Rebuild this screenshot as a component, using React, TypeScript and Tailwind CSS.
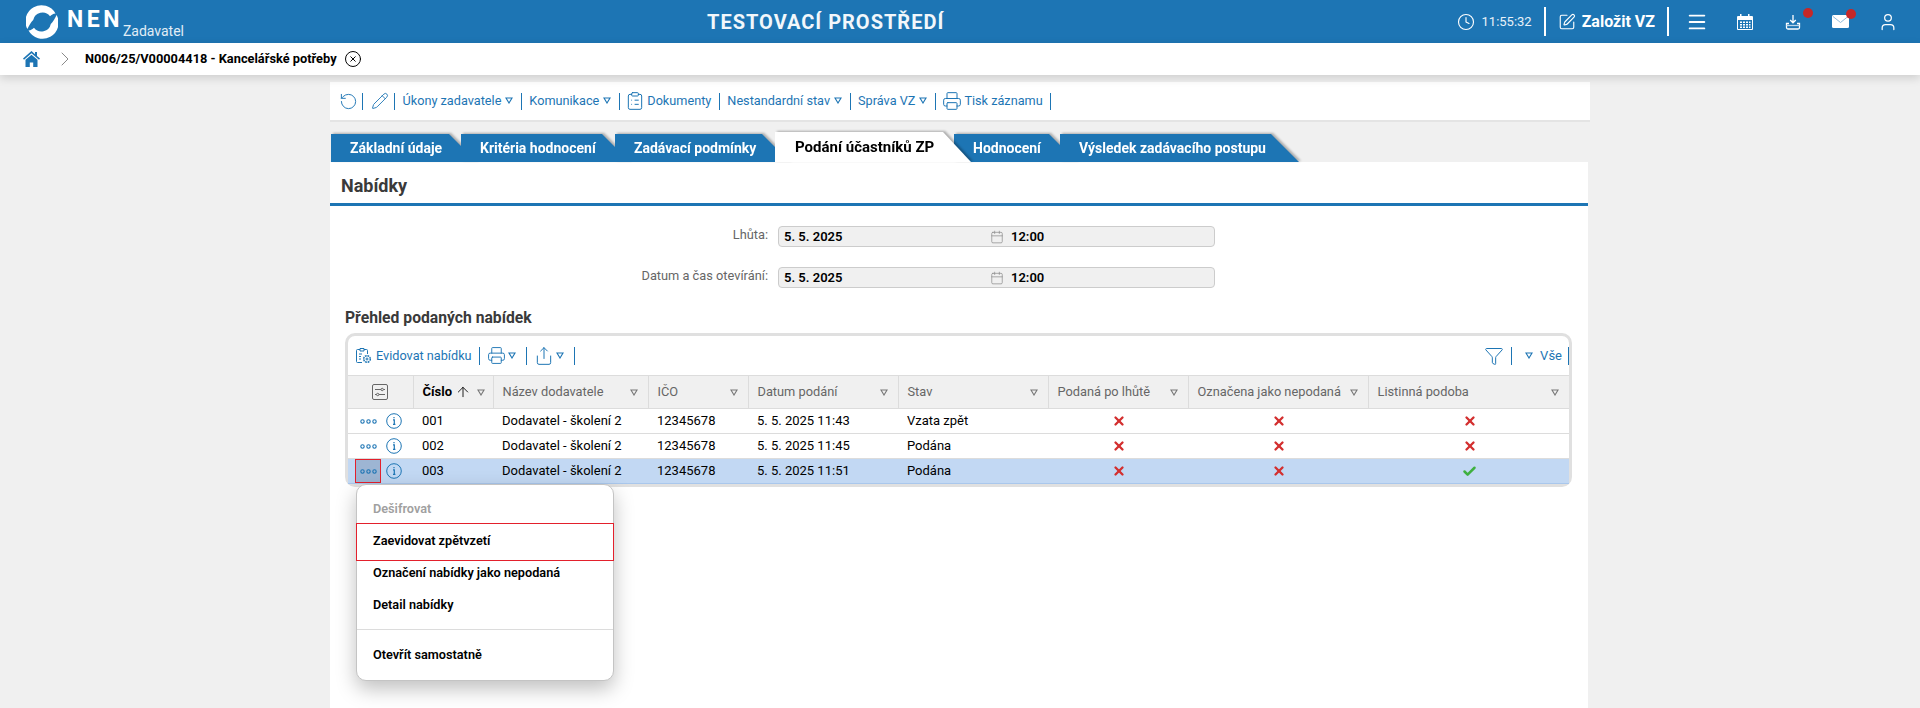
import { Calendar, Clock, Funnel, Menu, Pencil, Printer, RotateCcw, Share, SquarePen, User, ClipboardList, ChevronRight, CircleX, ArrowUp, X, Check } from 'lucide-react';

const BLUE = 'text-[#1d75b4]';

function Tri({ className = 'text-[#1d75b4]' }: { className?: string }) {
  return (
    <svg viewBox="0 0 8 7" className={`h-[7px] w-[8px] shrink-0 ${className}`} fill="none" stroke="currentColor" strokeWidth="1.1">
      <path d="M1 1h6L4 6z" />
    </svg>
  );
}

function Sep({ h = 'h-[17px]' }: { h?: string }) {
  return <span className={`w-px shrink-0 bg-[#1d75b4] ${h}`} />;
}

function Logo() {
  const arc = 'M1.400 24A16 16 0 0 1 29.500 8.500C27 8.500 25.500 10 24 11.200A9.500 9.500 0 0 0 7.200 15C5 17 3 20.500 1.400 24z';
  return (
    <svg viewBox="0 0 32 34" className="h-[34px] w-[32px]" fill="#fff">
      <path d={arc} />
      <path d={arc} transform="rotate(180 16 17)" />
    </svg>
  );
}

function HomeIcon() {
  return (
    <svg viewBox="0 0 17 16" className="h-[16px] w-[17px]" fill="#1d75b4">
      <path d="M8.500 0 0 7.500l1 1.200L8.500 2.300 16 8.700l1-1.200-3-2.600V1h-2v2.200z" />
      <path d="M8.500 3.700 2.500 8.800V16h4.300v-4.500h3.400V16h4.300V8.800z" />
    </svg>
  );
}

function CalendarIcon() {
  return (
    <svg viewBox="0 0 16 16" className="h-[16px] w-[16px]" fill="#fff">
      <path d="M3 0h1.500v2H11V0h1.500v2H15a1 1 0 0 1 1 1v12a1 1 0 0 1-1 1H1a1 1 0 0 1-1-1V3a1 1 0 0 1 1-1h2zM1 6v9h14V6z" />
      <path d="M3 7.500h2v1.500H3zM6 7.500h2v1.500H6zM9 7.500h2v1.500H9zM12 7.500h1.500v1.500H12zM3 10h2v1.500H3zM6 10h2v1.500H6zM9 10h2v1.500H9zM12 10h1.500v1.500H12zM3 12.500h2V14H3zM6 12.500h2V14H6zM9 12.500h2V14H9zM12 12.500h1.500V14H12z" />
    </svg>
  );
}

function TrayIcon() {
  return (
    <svg viewBox="0 0 16 16" className="h-[16px] w-[16px]" fill="none" stroke="#fff" strokeWidth="1.300">
      <path d="M8 1v7.500M5.200 6 8 8.800 10.800 6M4 9.500H1.500v4a1.500 1.500 0 0 0 1.500 1.500h10a1.500 1.500 0 0 0 1.500-1.500v-4H12" />
      <path d="M1.500 11.500h13" stroke="#bcd6ea" />
    </svg>
  );
}

function MailIcon() {
  return (
    <svg viewBox="0 0 17 13" className="h-[13px] w-[17px]">
      <rect width="17" height="13" rx="1.500" fill="#fff" />
      <path d="M1 1.500 8.500 7.500 16 1.500" fill="none" stroke="#8fbbdb" strokeWidth="1" />
    </svg>
  );
}

function EvidovatIcon() {
  return (
    <svg viewBox="0 0 17 17" className="h-[17px] w-[17px]" fill="none" stroke="#1d75b4" strokeWidth="1">
      <path d="M7 15.500H2.500a1 1 0 0 1-1-1V3.500a1 1 0 0 1 1-1H5M9 2.500h2.500a1 1 0 0 1 1 1V7M5 1.500h4V4H5z" />
      <path d="M4 7h3M4 9.500h2M4 12h2" />
      <circle cx="12" cy="12" r="3.300" strokeDasharray="1.800 0.800" strokeWidth="1.500" />
      <circle cx="12" cy="12" r="1" />
    </svg>
  );
}

function ColumnsIcon() {
  return (
    <svg viewBox="0 0 16 16" className="mx-auto h-[16px] w-[16px]" fill="none" stroke="#666" strokeWidth="1">
      <rect x="0.500" y="0.500" width="15" height="15" rx="1.500" />
      <path d="M3 5.500h6M11.500 5.500H13M3 10.500h1.500M7 10.500h6" />
      <circle cx="10.200" cy="5.500" r="1.200" />
      <circle cx="5.700" cy="10.500" r="1.200" />
    </svg>
  );
}

function Dots() {
  return (
    <svg viewBox="0 0 17 5" className="h-[5px] w-[17px]" fill="none" stroke="#1d75b4" strokeWidth="1.100">
      <circle cx="2.500" cy="2.500" r="1.700" />
      <circle cx="8.500" cy="2.500" r="1.700" />
      <circle cx="14.500" cy="2.500" r="1.700" />
    </svg>
  );
}

function InfoIcon() {
  return (
    <svg viewBox="0 0 16 16" className="h-[16px] w-[16px]" fill="none" stroke="#1d75b4" strokeWidth="1">
      <circle cx="8" cy="8" r="7.300" />
      <path d="M7 6.800h1.300v4.200M7 11.300h2.400M8 4v1.300" strokeWidth="1.200" />
    </svg>
  );
}

const tabs = [
  { label: 'Základní údaje', w: 'w-[146px]', ml: '' },
  { label: 'Kritéria hodnocení', w: 'w-[169px]', ml: '-ml-[16px]' },
  { label: 'Zadávací podmínky', w: 'w-[175px]', ml: '-ml-[15px]' },
  { label: 'Podání účastníků ZP', w: 'w-[196px]', ml: '-ml-[15px]', active: true },
  { label: 'Hodnocení', w: 'w-[123px]', ml: '-ml-[17px]' },
  { label: 'Výsledek zadávacího postupu', w: 'w-[239px]', ml: '-ml-[17px]' },
];

const columns = [
  { label: 'Název dodavatele', w: 'w-[155px]' },
  { label: 'IČO', w: 'w-[100px]' },
  { label: 'Datum podání', w: 'w-[150px]' },
  { label: 'Stav', w: 'w-[150px]' },
  { label: 'Podaná po lhůtě', w: 'w-[140px]' },
  { label: 'Označena jako nepodaná', w: 'w-[180px]' },
  { label: 'Listinná podoba', w: 'w-[201px]' },
];

const rows = [
  { id: '001', date: '5. 5. 2025 11:43', stav: 'Vzata zpět', paper: false },
  { id: '002', date: '5. 5. 2025 11:45', stav: 'Podána', paper: false },
  { id: '003', date: '5. 5. 2025 11:51', stav: 'Podána', paper: true, selected: true },
];

function Cross() {
  return <X className="mx-auto size-[14px] text-[#d32f2f]" strokeWidth={4} />;
}

function DateRow({ label, className = '' }: { label: string; className?: string }) {
  return (
    <div className={`flex h-[21px] items-center gap-[10px] ${className}`}>
      <div className="w-[438px] pb-[4px] text-right text-[12.800px] text-[#666]">{label}</div>
      <div className="flex h-[21px] w-[437px] items-center rounded-[4px] border border-[#ccc] bg-[#f0f0f0] pl-[5px] text-[13px] font-semibold text-black">
        <span className="w-[206px]">5. 5. 2025</span>
        <Calendar className="size-[14px] text-[#888]" strokeWidth={1.200} />
        <span className="ml-[7px]">12:00</span>
      </div>
    </div>
  );
}

function MenuItem({ label, className = 'text-black' }: { label: string; className?: string }) {
  return <div className={`flex h-[32px] items-center px-[16px] text-[12.700px] font-semibold ${className}`}>{label}</div>;
}

export default function App() {
  return (
    <div className="h-[708px] overflow-hidden bg-[#f0f0f0] font-[Roboto,sans-serif]">
      <header className="flex h-[43px] items-center bg-[#1d75b4] text-white">
        <div className="flex w-[707px] shrink-0 items-center pl-[26px]">
          <Logo />
          <span className="ml-[9px] mt-[-4px] text-[23px] leading-none font-bold tracking-[3.500px]">NEN</span>
          <span className="mt-[18px] text-[14px] leading-none text-[#e1edf6]">Zadavatel</span>
        </div>
        <div className="text-[20px] font-bold tracking-[1px] text-[#f2f7fb]">TESTOVACÍ PROSTŘEDÍ</div>
        <div className="ml-auto flex items-center">
          <Clock className="size-[18px]" strokeWidth={1.500} />
          <span className="ml-[7px] text-[13px] text-[#e8f1f8]">11:55:32</span>
          <span className="ml-[12px] h-[29px] w-[2px] bg-white" />
          <SquarePen className="ml-[12px] size-[18px]" strokeWidth={1.500} />
          <span className="ml-[6px] text-[16px] font-bold">Založit VZ</span>
          <span className="ml-[12px] h-[29px] w-[2px] bg-white" />
          <Menu className="ml-[17px] size-[22px]" strokeWidth={2} />
          <span className="ml-[29px]"><CalendarIcon /></span>
          <span className="relative ml-[32px]">
            <TrayIcon />
            <span className="absolute -right-[12px] -top-[6px] size-[10px] rounded-full bg-[#c62828]" />
          </span>
          <span className="relative ml-[31px]">
            <MailIcon />
            <span className="absolute -right-[7px] -top-[6px] size-[10px] rounded-full bg-[#c62828]" />
          </span>
          <User className="ml-[29px] mr-[22px] size-[20px]" strokeWidth={1.500} />
        </div>
      </header>

      <div className="relative flex h-[32px] items-center bg-white pl-[23px] shadow-[0_3px_10px_rgba(0,0,0,0.15)]">
        <HomeIcon />
        <ChevronRight className="ml-[13px] size-[24px] text-[#8a8a8a]" strokeWidth={1} />
        <span className="ml-[8px] text-[12.800px] font-bold text-black">N006/25/V00004418 - Kancelářské potřeby</span>
        <CircleX className="ml-[7px] size-[18px] text-black" strokeWidth={1.300} />
      </div>

      <main className="ml-[330px] w-[1260px]">
        <nav className={`mt-[7px] flex h-[40px] items-center gap-[7.500px] border-b-2 border-[#e4e4e4] bg-white pl-[9px] text-[12.700px] ${BLUE}`}>
          <RotateCcw className="-mr-[3.500px] size-[19px]" strokeWidth={1.200} />
          <Sep />
          <Pencil className="-mr-[2px] size-[18px]" strokeWidth={1.200} />
          <Sep />
          <span className="flex items-center gap-[4px]">
            Úkony zadavatele
            <Tri />
          </span>
          <Sep />
          <span className="flex items-center gap-[4px]">
            Komunikace
            <Tri />
          </span>
          <Sep />
          <span className="-ml-[2px] flex items-center gap-[2px]">
            <ClipboardList className="size-[20px]" strokeWidth={1.200} />
            Dokumenty
          </span>
          <Sep />
          <span className="flex items-center gap-[4px]">
            Nestandardní stav
            <Tri />
          </span>
          <Sep />
          <span className="flex items-center gap-[4px]">
            Správa VZ
            <Tri />
          </span>
          <Sep />
          <span className="-ml-[1px] flex items-center gap-[2px]">
            <Printer className="size-[20px]" strokeWidth={1.200} />
            Tisk záznamu
          </span>
          <Sep />
        </nav>

        <div className="mt-[10px] flex h-[30px] items-end pl-[1px]">
          {tabs.map((t) => (
            <div key={t.label} className={`${t.w} ${t.ml} relative ${t.active ? 'z-10' : ''} [filter:drop-shadow(2px_-1px_1px_rgba(0,0,0,0.28))]`}>
              <div
                className={`flex items-center font-bold whitespace-nowrap [clip-path:polygon(0_0,calc(100%-28px)_0,100%_100%,0_100%)] ${
                  t.active ? 'h-[30px] bg-white pl-[20px] text-[15px] text-black' : 'h-[28px] bg-[#1d75b4] pl-[19px] text-[14px] text-white'
                }`}
              >
                {t.label}
              </div>
            </div>
          ))}
        </div>

        <section className="h-[546px] w-[1258px] bg-white">
          <h1 className="flex h-[44px] items-center border-b-[3px] border-[#1d75b4] pl-[11px] pt-[6px] text-[18px] font-bold text-[#3a3a3a]">Nabídky</h1>
          <DateRow label="Lhůta:" className="mt-[20px]" />
          <DateRow label="Datum a čas otevírání:" className="mt-[20px]" />

          <h2 className="ml-[15px] mt-[20px] text-[15.700px] leading-[20px] font-bold text-[#3a3a3a]">Přehled podaných nabídek</h2>

          <div className="relative ml-[15px] mt-[5px] w-[1227px] rounded-[10px] border-[3px] border-[#e0e0e0]">
            <div className={`flex h-[39px] items-center gap-[7px] pl-[7px] text-[13px] ${BLUE}`}>
              <span className="flex items-center gap-[4px] text-[12.700px]">
                <EvidovatIcon />
                Evidovat nabídku
              </span>
              <Sep h="h-[18px]" />
              <span className="mr-[3px] flex items-center gap-[2px]">
                <Printer className="size-[19px]" strokeWidth={1.200} />
                <Tri />
              </span>
              <Sep h="h-[18px]" />
              <span className="mr-[3px] flex items-center gap-[2px]">
                <Share className="size-[20px]" strokeWidth={1.200} />
                <Tri />
              </span>
              <Sep h="h-[18px]" />
              <Funnel className="ml-auto size-[20px]" strokeWidth={1.200} />
              <Sep h="h-[18px]" />
              <span className="ml-[6px]"><Tri /></span>
              <span>Vše</span>
              <span className="-ml-[1px]"><Sep h="h-[18px] block" /></span>
            </div>

            <table className="w-[1221px] table-fixed border-collapse text-[13px]">
              <thead>
                <tr className="h-[33px] bg-[#f0f0f0] text-left text-[12.800px] text-[#666]">
                  <th className="w-[65px] border border-l-0 border-[#dcdcdc] font-normal">
                    <ColumnsIcon />
                  </th>
                  <th className="w-[80px] border border-[#dcdcdc] pl-[9px] text-[13px] font-bold text-black">
                    <span className="flex items-center">
                      Číslo
                      <ArrowUp className="ml-[3px] size-[16px]" strokeWidth={1.300} />
                      <span className="ml-[6px]"><Tri className="text-[#777]" /></span>
                    </span>
                  </th>
                  {columns.map((c) => (
                    <th key={c.label} className={`${c.w} border border-[#dcdcdc] pl-[9px] pr-[10px] font-normal last:border-r-0`}>
                      <span className="flex items-center justify-between">
                        {c.label}
                        <Tri className="text-[#777]" />
                      </span>
                    </th>
                  ))}
                </tr>
              </thead>
              <tbody>
                {rows.map((r) => (
                  <tr key={r.id} className={`h-[25px] border-b text-black ${r.selected ? 'border-[#a9c7ec] bg-[#c2d8f3]' : 'border-[#dcdcdc]'}`}>
                    <td className="p-0">
                      <div className="flex items-center pl-[7px]">
                        <span className={`flex h-[24px] w-[26px] items-center justify-center ${r.selected ? 'border border-[#e3202c] bg-[#9db5d3]' : ''}`}>
                          <Dots />
                        </span>
                        <span className="ml-[5px]"><InfoIcon /></span>
                      </div>
                    </td>
                    <td className="pl-[9px]">{r.id}</td>
                    <td className="pl-[9px]">Dodavatel - školení 2</td>
                    <td className="pl-[9px]">12345678</td>
                    <td className="pl-[9px]">{r.date}</td>
                    <td className="pl-[9px]">{r.stav}</td>
                    <td className="pl-[2px]"><Cross /></td>
                    <td className="pl-[2px]"><Cross /></td>
                    <td className="pl-[2px]">
                      {r.paper ? <Check className="mx-auto size-[15px] text-[#3fb03f]" strokeWidth={4} /> : <Cross />}
                    </td>
                  </tr>
                ))}
              </tbody>
            </table>

            <div className="absolute left-[8px] top-[148px] z-20 w-[258px] rounded-[10px] border border-[#c4c4c4] bg-white pt-[8px] pb-[9px] shadow-[0_8px_20px_rgba(0,0,0,0.25)]">
              <MenuItem label="Dešifrovat" className="font-medium text-[#a0a0a0]" />
              <MenuItem label="Zaevidovat zpětvzetí" className="-mx-px -mt-[2px] -mb-[4px] h-[38px] border border-[#e3202c] pb-[3px] text-black" />
              <MenuItem label="Označení nabídky jako nepodaná" />
              <MenuItem label="Detail nabídky" />
              <div className="mb-[9px] mt-[8px] h-px bg-[#dcdcdc]" />
              <MenuItem label="Otevřít samostatně" />
            </div>
          </div>
        </section>
      </main>
    </div>
  );
}
